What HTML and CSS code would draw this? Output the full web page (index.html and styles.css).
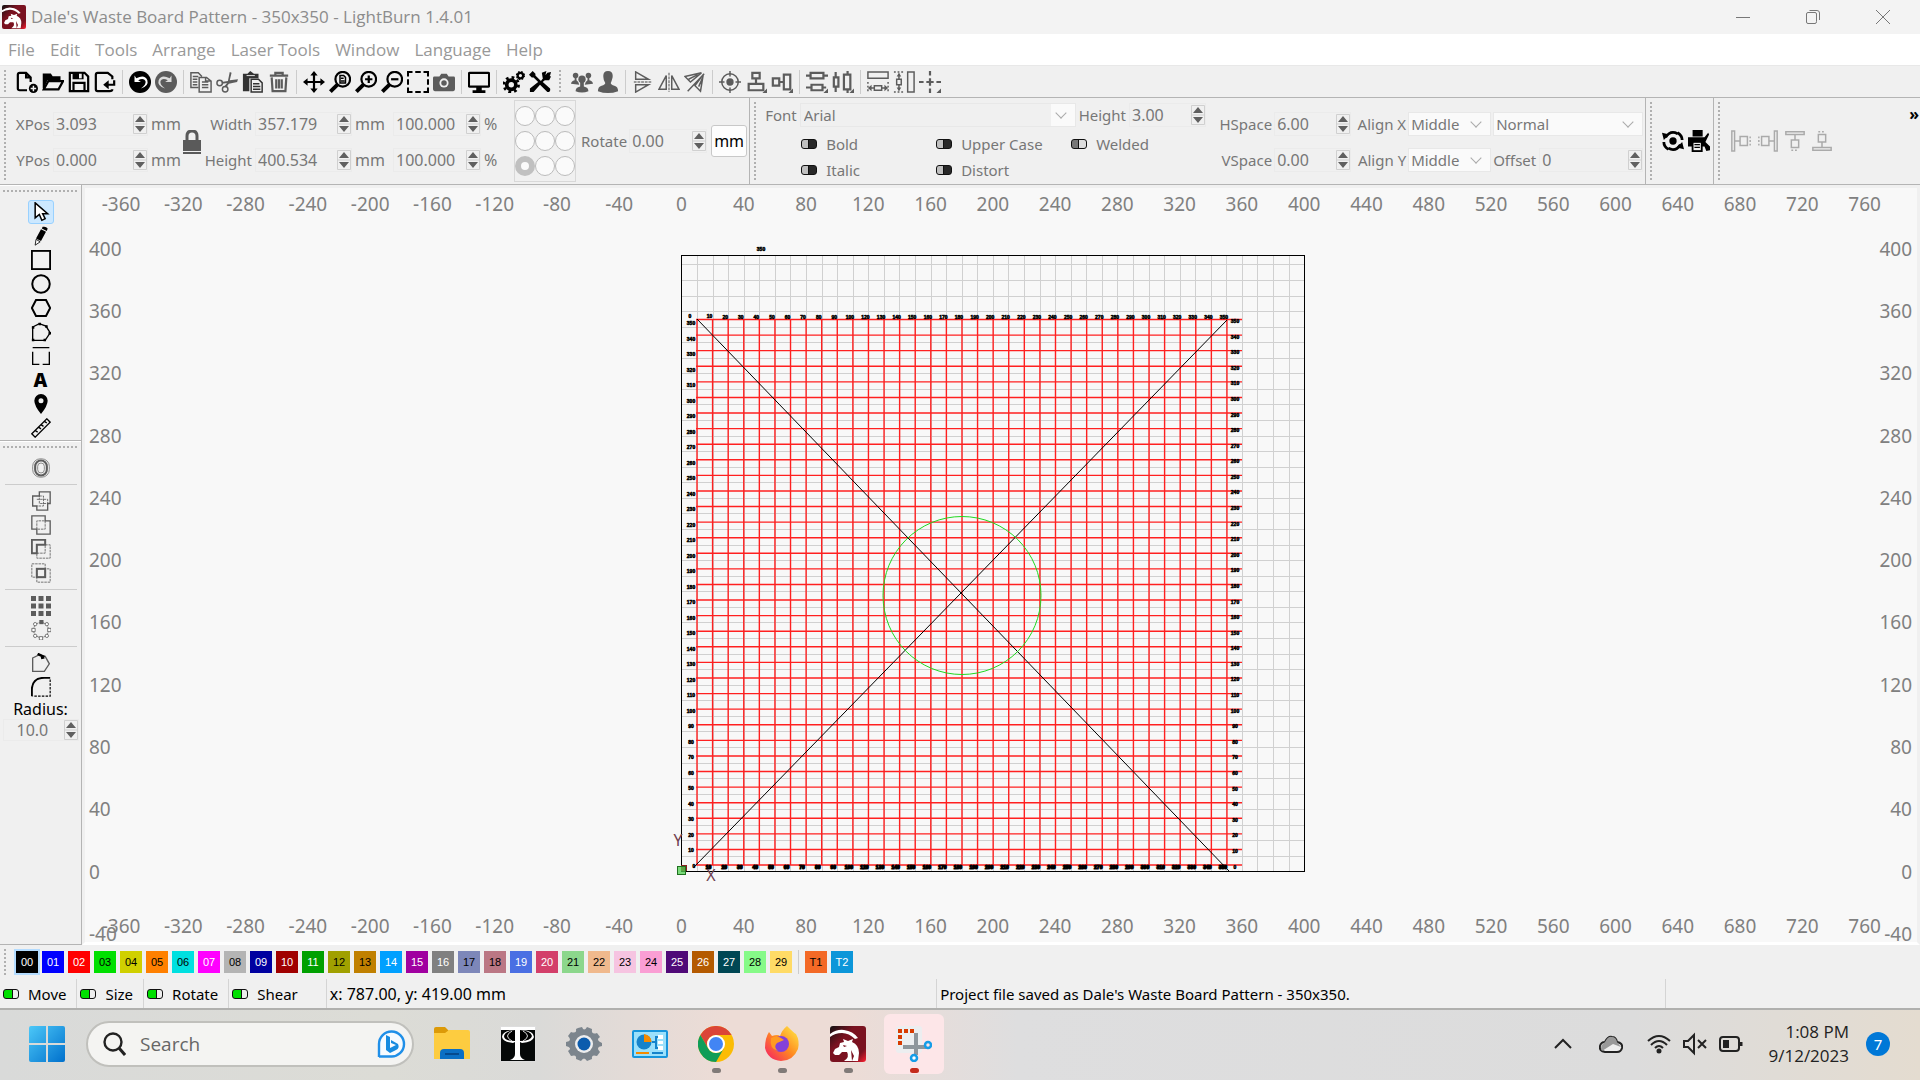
FILE: index.html
```
<!DOCTYPE html>
<html lang="en">
<head>
    <meta charset="UTF-8">
    <meta name="viewport" content="width=device-width, initial-scale=1.0">
    <title>Dale's Waste Board Pattern - 350x350 - LightBurn 1.4.01</title>
    <link rel="stylesheet" href="styles.css">
</head>
<body>
    <!-- Shared shapes -->
    <svg class="defs" aria-hidden="true">
        <linearGradient id="red" x1="0" y1="0" x2="1" y2="1">
            <stop offset="0" stop-color="#111"/><stop offset=".35" stop-color="#7a1220"/><stop offset=".8" stop-color="#7a1220"/><stop offset="1" stop-color="#ff2030"/>
        </linearGradient>
        <symbol id="dragon" viewBox="0 0 36 36">
            <rect width="36" height="36" rx="3" fill="url(#red)"/>
            <path d="M0 8Q7 3 14 4Q23 5 28 12L25 13Q19 7 12 7Q5 7 0 11Z" fill="#fff"/>
            <path d="M3 27L5 23L9 21L10 17L14 16L13 13L18 15L23 13L22 16Q29 19 29 27L28 35H14Q20 31 17 26L12 26L9 29L5 29Z" fill="#fff"/>
            <path d="M13 19l4 1-3 1zM21 24l3 6-2 5M16 25l-6 1" fill="#7a1220"/>
        </symbol>
        <symbol id="spin" viewBox="0 0 14 20">
            <path d="M.5 .5H13.5V19.5H.5ZM1 10H13" fill="none" stroke="#d0d0d0"/>
            <path d="M7 2L12 8H2ZM7 18L12 12H2Z" fill="#606060"/>
        </symbol>
    </svg>

    <header class="title-bar">
        <svg class="app-icon"><use href="#dragon"/></svg>
        <span class="title">Dale's Waste Board Pattern - 350x350 - LightBurn 1.4.01</span>
        <button class="win-btn" aria-label="Minimize"><svg viewBox="0 0 16 16"><path d="M1 8.5H15"/></svg></button>
        <button class="win-btn" aria-label="Restore"><svg viewBox="0 0 16 16"><path d="M1.5 5Q1.5 3.500 3 3.500H10Q11.500 3.500 11.500 5V12.500Q11.500 14.500 10 14.500H3Q1.500 14.500 1.500 13ZM4.500 1.500H12Q14.500 1.500 14.500 4V11"/></svg></button>
        <button class="win-btn" aria-label="Close"><svg viewBox="0 0 16 16"><path d="M1 1L15 15M15 1L1 15"/></svg></button>
    </header>

    <nav class="menu-bar">
        <button>File</button><button>Edit</button><button>Tools</button><button>Arrange</button><button>Laser Tools</button><button>Window</button><button>Language</button><button>Help</button>
    </nav>

    <div class="tool-bar">
        <i class="handle"></i>
        <div class="tools">
            <button aria-label="New"><svg viewBox="0 0 24 24"><path class="l" d="M12 21H4Q2 21 2 19V4Q2 2 4 2H11L16 7V12M11 2V7H16"/><circle cx="19" cy="19" r="5"/><path d="M19 16v6M16 19h6" stroke="#f0f0f0" stroke-width="1.6"/></svg></button>
            <button aria-label="Open"><svg viewBox="0 0 24 24"><path class="l" d="M2 19V4H9L11 7H19V10M2 20L7 11H23L18 20Z"/><path d="M2 4H9L11 7H19V10H6L2 19Z"/></svg></button>
            <button aria-label="Save"><svg viewBox="0 0 24 24"><path class="l" d="M2 2H18L22 6V22H2ZM6 22V13H18V22"/><path d="M5 2H17V9H5Z"/><path d="M12 3h3v5h-3z" fill="#f0f0f0"/></svg></button>
            <button aria-label="Import"><svg viewBox="0 0 24 24"><path class="l" d="M20 9V6L15 2H4Q2 2 2 4V20Q2 22 4 22H17Q20 22 20 20M22 10V15H14"/><path d="M10 15L16 10V20Z"/></svg></button>
            <i class="sep"></i>
            <button aria-label="Undo"><svg viewBox="0 0 24 24"><circle cx="12" cy="12" r="12"/><path d="M6 5V12H13L10 10Q16 7 18 11Q19 15 13 19Q22 16 20 10Q17 3 8 8Z" fill="#fff"/></svg></button>
            <button class="gray" aria-label="Redo"><svg viewBox="0 0 24 24"><circle cx="12" cy="12" r="12"/><path d="M18 5V12H11L14 10Q8 7 6 11Q5 15 11 19Q2 16 4 10Q7 3 16 8Z" fill="#ddd"/></svg></button>
            <i class="sep"></i>
            <button class="gray" aria-label="Copy"><svg viewBox="0 0 24 24"><path class="m" d="M9 18H1V2H9L13 6M3 6h6M3 9h5M3 12h5M3 15h5M10 7H18L23 11V23H10ZM13 12h7M13 15h7M13 18h7M17 7v4h5"/></svg></button>
            <button class="gray" aria-label="Cut"><svg viewBox="0 0 24 24"><circle class="m" cx="4" cy="13" r="3"/><circle class="m" cx="10" cy="20" r="3"/><path d="M6 12L13 11L15 1L17 2L15 10L24 9L23 12L14 14L11 18L9 17L12 13L7 14Z"/></svg></button>
            <button class="dark" aria-label="Paste"><svg viewBox="0 0 24 24"><path d="M1 3H6L9 0L13 3H18V8H8V22H1Z"/><path class="m" d="M10 9H18L22 13V23H10ZM12 14h7M12 17h8M12 20h8"/><path d="M5 5h9" stroke="#eee"/></svg></button>
            <button class="gray" aria-label="Delete"><svg viewBox="0 0 24 24"><path class="l" d="M2 5H22M8 5V2H16V5M4 7L5 22H19L20 7M9 9V19M12 9V19M15 9V19"/></svg></button>
            <i class="sep"></i>
            <button aria-label="Move"><svg viewBox="0 0 24 24"><path class="l" d="M12 2V22M2 12H22"/><path d="M12 0L16 5H8ZM12 24L8 19H16ZM0 12L5 8V16ZM24 12L19 16V8Z"/></svg></button>
            <button aria-label="Zoom to page"><svg viewBox="0 0 24 24"><circle class="l" cx="15" cy="9" r="8"/><path d="M8 13L11 16L3 24L0 21Z"/><path class="m" d="M12 5H16L18 7V13H12ZM13 8h3M13 11h4"/></svg></button>
            <button aria-label="Zoom in"><svg viewBox="0 0 24 24"><circle class="l" cx="15" cy="9" r="8"/><path d="M8 13L11 16L3 24L0 21Z"/><path class="l" d="M15 5V13M11 9H19"/></svg></button>
            <button aria-label="Zoom out"><svg viewBox="0 0 24 24"><circle class="l" cx="15" cy="9" r="8"/><path d="M8 13L11 16L3 24L0 21Z"/><path class="l" d="M11 9H19"/></svg></button>
            <button aria-label="Frame selection"><svg viewBox="0 0 24 24"><path class="l" d="M1 6V1H6M9 1H15M18 1H23V6M23 9V15M23 18V23H18M15 23H9M6 23H1V18M1 15V9"/></svg></button>
            <button class="gray" aria-label="Camera"><svg viewBox="0 0 24 24"><path d="M1 6H7L9 3H15L17 6H23Q24 6 24 8V20Q24 22 22 22H2Q0 22 0 20V8Q0 6 1 6Z"/><circle cx="12" cy="13" r="5" fill="#f0f0f0"/><circle cx="12" cy="13" r="3"/></svg></button>
            <i class="sep"></i>
            <button aria-label="Preview"><svg viewBox="0 0 24 24"><rect class="l" x="1" y="2" width="22" height="15" rx="1"/><path d="M9 17H15V21H19V24H5V21H9Z"/></svg></button>
            <i class="sep"></i>
            <button aria-label="Settings"><svg viewBox="0 0 24 24"><circle cx="9" cy="15" r="5" fill="none" stroke="currentColor" stroke-width="4"/><circle cx="9" cy="15" r="8" fill="none" stroke="currentColor" stroke-width="3" stroke-dasharray="3 3.300"/><circle cx="19" cy="5" r="3" fill="none" stroke="currentColor" stroke-width="2.500"/><circle cx="19" cy="5" r="4" fill="none" stroke="currentColor" stroke-width="2" stroke-dasharray="1.500 1.700"/></svg></button>
            <button aria-label="Device settings"><svg viewBox="0 0 24 24"><path d="M0 4L4 0L7 3V5L13 11L20 2L24 1L23 5L15 12L23 19Q24 23 20 23L12 15L5 23H1V19L10 12L5 7H3Z"/><path d="M15 8L14 2L19 0L18 4L24 6L22 10L17 10Z"/></svg></button>
        </div>
        <i class="handle group-edge"></i>
        <div class="tools gray">
            <button aria-label="Group"><svg viewBox="0 0 24 24"><circle cx="5" cy="5" r="3"/><circle cx="19" cy="5" r="3"/><circle cx="12" cy="9" r="4"/><path d="M0 14Q0 11 4 10V7H6V10Q9 12 9 15ZM24 14Q24 11 20 10V7H18V10Q15 12 15 15ZM5 22Q5 18 10 17V12H14V17Q19 18 19 22Q12 25 5 22Z"/></svg></button>
            <button aria-label="Ungroup"><svg viewBox="0 0 24 24"><path d="M12 0Q18 0 17 7Q16 11 15 13Q15 15 19 16Q23 17 23 22Q12 26 1 22Q1 17 5 16Q9 15 9 13Q7 10 7 7Q6 0 12 0Z"/></svg></button>
            <i class="sep"></i>
            <button aria-label="Flip vertical"><svg viewBox="0 0 24 24"><path class="m" d="M4 1V9H18ZM4 23V15H18Z"/><path d="M2 12H21" stroke="#999" stroke-width="2" stroke-dasharray="3 1"/></svg></button>
            <button aria-label="Flip horizontal"><svg viewBox="0 0 24 24"><path class="m" d="M1 20H9V5ZM23 20H15V5Z"/><path d="M12 2V23" stroke="#999" stroke-width="2" stroke-dasharray="3 1"/></svg></button>
            <button aria-label="Mirror across line"><svg viewBox="0 0 24 24"><path class="m" d="M1 6L19 2L7 12ZM21 4L18 22L12 16ZM4 22L22 3M5 9L15 4M16 17L20 8"/></svg></button>
            <i class="sep"></i>
            <button aria-label="Align centers"><svg viewBox="0 0 24 24"><circle class="m" cx="12" cy="12" r="9"/><circle cx="12" cy="12" r="4"/><path class="m" d="M12 0V6M12 18V24M0 12H6M18 12H24"/></svg></button>
            <button aria-label="Align vertical"><svg viewBox="0 0 24 24"><path class="l" d="M8 2H16V8H8ZM12 8V14M4 14H20V21H4Z"/><path d="M24 19V24H19Z"/></svg></button>
            <button aria-label="Align horizontal"><svg viewBox="0 0 24 24"><path class="l" d="M2 8H9V16H2ZM9 12H14M14 4H21V20H14Z"/><path d="M24 19V24H19Z"/></svg></button>
            <i class="sep"></i>
            <button aria-label="Distribute vertical"><svg viewBox="0 0 24 24"><path class="l" d="M5 2H19V8H5ZM0 5H5M19 5H24M6 15H18V21H6ZM0 18H6M18 18H22"/><path d="M24 19V24H19Z"/></svg></button>
            <button aria-label="Distribute horizontal"><svg viewBox="0 0 24 24"><path class="l" d="M2 7H7V17H2ZM4 1V7M4 17V23M13 4H20V20H13ZM17 0V4M17 20V24"/><path d="M24 19V24H19Z"/></svg></button>
            <i class="sep"></i>
            <button aria-label="Make same width"><svg viewBox="0 0 24 24"><path class="m" d="M1 1H23V8H1ZM8 16H16V21H8ZM3 18.500H8M16 18.500H21"/><path d="M1 18.500L5 15V22ZM23 18.500L19 15V22Z"/><path class="m" d="M1 12V24M23 12V24" stroke-dasharray="2 2"/></svg></button>
            <button aria-label="Make same height"><svg viewBox="0 0 24 24"><path class="m" d="M16 1H23V23H16ZM4 9H9V15H4ZM6.500 3V9M6.500 15V21"/><path d="M6.500 2L9 6H4ZM6.500 22L4 18H9Z"/><path class="m" d="M1 1H12M1 23H12" stroke-dasharray="2 2"/></svg></button>
            <button aria-label="Move to position"><svg viewBox="0 0 24 24"><path class="l" d="M12 0V5M12 8V16M12 19V24M0 12H5M8 12H16M19 12H24"/><path d="M24 19V24H19Z"/></svg></button>
        </div>
    </div>

    <div class="props">
        <section class="panel">
            <i class="handle"></i>
            <div class="position">
                <label for="xpos">XPos</label>
                <span class="spin"><input id="xpos" value="3.093"><svg><use href="#spin"/></svg></span>
                <span>mm</span>
                <button class="lock" aria-label="Lock aspect ratio"><svg viewBox="0 0 18 24"><path d="M4 11V6Q4 1 9 1T14 6V11" fill="none" stroke="#5a5a5a" stroke-width="3"/><path d="M0 10H18V21H0ZM0 22H18V24H0Z" fill="#5a5a5a"/></svg></button>
                <label for="width">Width</label>
                <span class="spin"><input id="width" value="357.179"><svg><use href="#spin"/></svg></span>
                <span>mm</span>
                <span class="spin"><input aria-label="Width percent" value="100.000"><svg><use href="#spin"/></svg></span>
                <span>%</span>
                <label for="ypos">YPos</label>
                <span class="spin"><input id="ypos" value="0.000"><svg><use href="#spin"/></svg></span>
                <span>mm</span>
                <label for="height">Height</label>
                <span class="spin"><input id="height" value="400.534"><svg><use href="#spin"/></svg></span>
                <span>mm</span>
                <span class="spin"><input aria-label="Height percent" value="100.000"><svg><use href="#spin"/></svg></span>
                <span>%</span>
            </div>
            <div class="anchors">
                <input type="radio" name="anchor" aria-label="Top left"><input type="radio" name="anchor" aria-label="Top"><input type="radio" name="anchor" aria-label="Top right">
                <input type="radio" name="anchor" aria-label="Left"><input type="radio" name="anchor" aria-label="Center"><input type="radio" name="anchor" aria-label="Right">
                <input type="radio" name="anchor" aria-label="Bottom left" checked><input type="radio" name="anchor" aria-label="Bottom"><input type="radio" name="anchor" aria-label="Bottom right">
            </div>
            <label for="rotate">Rotate</label>
            <span class="spin rotate"><input id="rotate" value="0.00"><svg><use href="#spin"/></svg></span>
            <button class="unit">mm</button>
        </section>
        <section class="panel">
            <i class="handle"></i>
            <div class="font-box">
                <div class="font-row">
                    <label for="font">Font</label>
                    <span class="drop font"><select id="font"><option>Arial</option></select></span>
                    <label for="fheight">Height</label>
                    <span class="spin small"><input id="fheight" value="3.00"><svg><use href="#spin"/></svg></span>
                </div>
                <div class="checks">
                    <label><input type="checkbox" class="toggle">Bold</label>
                    <label><input type="checkbox" class="toggle">Upper Case</label>
                    <label><input type="checkbox" class="toggle" checked>Welded</label>
                    <label><input type="checkbox" class="toggle">Italic</label>
                    <label><input type="checkbox" class="toggle">Distort</label>
                </div>
            </div>
            <div class="spacing">
                <label for="hspace">HSpace</label>
                <span class="spin"><input id="hspace" value="6.00"><svg><use href="#spin"/></svg></span>
                <label for="alignx">Align X</label>
                <span class="drop"><select id="alignx"><option>Middle</option></select></span>
                <span class="drop"><select aria-label="Text mode"><option>Normal</option></select></span>
                <label for="vspace">VSpace</label>
                <span class="spin"><input id="vspace" value="0.00"><svg><use href="#spin"/></svg></span>
                <label for="aligny">Align Y</label>
                <span class="drop"><select id="aligny"><option>Middle</option></select></span>
                <span class="offset"><label for="offset">Offset</label><span class="spin"><input id="offset" value="0"><svg><use href="#spin"/></svg></span></span>
            </div>
        </section>
        <section class="panel">
            <i class="handle"></i>
            <div class="tools print">
                <button aria-label="Rotary"><svg viewBox="0 0 24 24"><path d="M4 8Q9 0 17 4M20 16Q15 24 7 20M2 13Q2 18 7 21M22 11Q22 6 17 3" fill="none" stroke="currentColor" stroke-width="3"/><circle cx="12" cy="12" r="4"/><path d="M0 3L8 5L2 11ZM24 21L16 19L22 13Z"/></svg></button>
                <button aria-label="Print and cut"><svg viewBox="0 0 24 24"><path d="M5 0H16V7H5ZM0 8H18L22 3L23 5L19 13L24 18V22L20 23L18 18H16V24H4V18H0Z"/><path d="M6 14H14V22H6Z" fill="#f0f0f0"/><path d="M7 16h6M7 19h6" stroke="currentColor" stroke-width="1.500"/></svg></button>
            </div>
        </section>
        <section class="panel last">
            <i class="handle"></i>
            <div class="tools light">
                <button aria-label="Align left"><svg viewBox="0 0 24 24"><path class="m" d="M2 1H5V23H2ZM5 12H11M11 7H19V17H11Z"/><path class="m" d="M22 7V17" stroke-dasharray="2 2"/></svg></button>
                <button aria-label="Align right"><svg viewBox="0 0 24 24"><path class="m" d="M19 1H22V23H19ZM19 12H13M5 7H13V17H5Z"/><path class="m" d="M2 7V17" stroke-dasharray="2 2"/></svg></button>
                <button aria-label="Align top"><svg viewBox="0 0 24 24"><path class="m" d="M2 2H22V5H2ZM12 5V11M8 11H16V19H8Z"/><path class="m" d="M8 22H16" stroke-dasharray="2 2"/></svg></button>
                <button aria-label="Align bottom"><svg viewBox="0 0 24 24"><path class="m" d="M2 19H22V22H2ZM12 19V13M8 5H16V13H8Z"/><path class="m" d="M8 2H16" stroke-dasharray="2 2"/></svg></button>
            </div>
            <button class="more" aria-label="More">»</button>
        </section>
    </div>

    <main class="workspace">
        <aside class="side">
            <div class="side-group">
                <i class="handle-h"></i>
                <button class="selected" aria-label="Select"><svg viewBox="0 0 24 24"><path d="M5 1V19L10 15L13 22L17 20L14 14H20Z" fill="#fff" stroke="#000" stroke-width="1.800"/></svg></button>
                <button aria-label="Draw lines"><svg viewBox="0 0 24 24"><path d="M14 1Q18 0 20 3L19 6L13 3ZM12 4L18 7L12 18L6 15Z"/><path d="M6 16L11 19L5 23Z" fill="#fff" stroke="#000"/></svg></button>
                <button aria-label="Rectangle"><svg viewBox="0 0 24 24"><rect class="l" x="1" y="1" width="22" height="22"/></svg></button>
                <button aria-label="Ellipse"><svg viewBox="0 0 24 24"><circle class="l" cx="12" cy="12" r="10.500"/></svg></button>
                <button aria-label="Polygon"><svg viewBox="0 0 24 24"><path class="l" d="M6 2.500H18L23 12L18 21.500H6L1 12Z"/></svg></button>
                <button aria-label="Edit nodes"><svg viewBox="0 0 24 24"><path class="m" d="M2 6L10 2L18 5L23 13L17 22H2Z"/><path d="M1 5h3v3H1zM9 1h3v3H9zM17 4h3v3h-3zM21 12h3v3h-3zM15 20h3v3h-3zM1 20h3v3H1z"/></svg></button>
                <button aria-label="Tabs"><svg viewBox="0 0 24 24"><path class="m" d="M2 2H22M2 7V22H10M22 7V22H14"/></svg></button>
                <button class="text-tool" aria-label="Text">A</button>
                <button aria-label="Position laser"><svg viewBox="0 0 24 24"><path fill-rule="evenodd" d="M12 24Q4 14 4 8A8 8 0 0 1 20 8Q20 14 12 24ZM12 5A3 3 0 1 0 12 11A3 3 0 1 0 12 5Z"/></svg></button>
                <button aria-label="Measure"><svg viewBox="0 0 24 24"><path class="m" d="M1 19L19 1L23 5L5 23ZM5 15L8 17M9 11L12 13M12 8L15 10M16 4L19 6"/></svg></button>
            </div>
            <div class="side-group gray">
                <i class="handle-h"></i>
                <button aria-label="Offset shapes"><svg viewBox="0 0 24 24"><rect x="2" y="1" width="20" height="22" rx="9" fill="none" stroke="#777"/><rect x="5" y="3" width="14" height="18" rx="7" fill="none" stroke="currentColor" stroke-width="2.500"/><rect x="8" y="6" width="8" height="12" rx="4" fill="none" stroke="#777"/></svg></button>
                <i class="rule"></i>
                <button aria-label="Weld"><svg viewBox="0 0 24 24"><path class="m" d="M2 6H10V1H23V15H20V23H7V18H2Z"/><path class="d" d="M10 6H15V18H7M7 10H20V15H10V6"/></svg></button>
                <button aria-label="Boolean union"><svg viewBox="0 0 24 24"><path class="m" d="M1 1H17V7H23V23H7V17H1Z"/><path class="d" d="M7 17V7H17V17Z"/></svg></button>
                <button aria-label="Boolean subtract"><svg viewBox="0 0 24 24"><path class="l" d="M1 1H17V7H7V17H1Z"/><path class="d" d="M17 7H23V23H7V17H17Z"/></svg></button>
                <button aria-label="Boolean intersection"><svg viewBox="0 0 24 24"><path class="d" d="M1 1H17V17H1ZM7 7H23V23H7Z"/><rect class="l" x="7" y="7" width="10" height="10"/></svg></button>
                <i class="rule"></i>
                <button aria-label="Grid array"><svg viewBox="0 0 24 24"><path d="M0 0h6v6H0zM9 0h6v6H9zM18 0h6v6h-6zM0 9h6v6H0zM9 9h6v6H9zM18 9h6v6h-6zM0 18h6v6H0zM9 18h6v6H9zM18 18h6v6h-6z"/></svg></button>
                <button aria-label="Circular array"><svg viewBox="0 0 24 24"><circle class="d" cx="12" cy="12" r="9"/><path d="M10 0h5v5h-5z"/><g fill="#fff" stroke="currentColor"><path d="M1 10h4v4H1zM20 10h4v4h-4zM10 20h4v4h-4z"/><circle cx="5" cy="5" r="2"/><circle cx="19" cy="5" r="2"/><circle cx="5" cy="19" r="2"/><circle cx="19" cy="19" r="2"/></g></svg></button>
                <i class="rule"></i>
                <button aria-label="Start point"><svg viewBox="0 0 24 24"><path class="m" d="M2 6L10 2L17 4L22 13L16 22H2Z"/><path d="M8 1L16 5M16 5L12 6" stroke="#000" stroke-width="3"/></svg></button>
                <button class="black" aria-label="Radius"><svg viewBox="0 0 24 24"><path class="l" d="M1 23V16Q1 1 16 1H23"/><path d="M23 3V23H2" fill="none" stroke="#000" stroke-width="1.400" stroke-dasharray="3 1.500"/></svg></button>
                <label for="radius">Radius:</label>
                <span class="spin"><input id="radius" value="10.0"><svg><use href="#spin"/></svg></span>
            </div>
        </aside>
        <div class="canvas">
            <svg id="bed" viewBox="85 188 1832 754"></svg>
        </div>
    </main>

    <div class="palette">
        <i class="handle"></i>
        <div class="swatches" id="swatches"></div>
    </div>

    <div class="status-bar">
        <label class="cell"><input type="checkbox" class="toggle" checked>Move</label>
        <label class="cell"><input type="checkbox" class="toggle" checked>Size</label>
        <label class="cell"><input type="checkbox" class="toggle" checked>Rotate</label>
        <label class="cell shear"><input type="checkbox" class="toggle" checked>Shear</label>
        <span class="cell coords">x: 787.00, y: 419.00 mm</span>
        <span class="cell message">Project file saved as Dale's Waste Board Pattern - 350x350.</span>
        <span class="cell rest"></span>
    </div>

    <footer class="task-bar">
        <button class="start" aria-label="Start"><svg viewBox="0 0 36 36"><linearGradient id="win" x1="0" y1="0" x2="1" y2="1"><stop offset="0" stop-color="#4cc8f8"/><stop offset="1" stop-color="#0070cc"/></linearGradient><path d="M0 2Q0 0 2 0H17V17H0ZM19 0H34Q36 0 36 2V17H19ZM0 19H17V36H2Q0 36 0 34ZM19 19H36V34Q36 36 34 36H19Z" fill="url(#win)"/></svg></button>
        <div class="search">
            <svg viewBox="0 0 24 24"><circle cx="11" cy="10" r="8.500" fill="none" stroke="#222" stroke-width="2.400"/><path d="M17 16L23 23" stroke="#222" stroke-width="3"/></svg>
            <input type="search" placeholder="Search" aria-label="Search">
            <svg class="bing" viewBox="0 0 30 30"><path d="M3 28V15A12.500 12.500 0 1 1 15 27.500H3" fill="#f6fbff" stroke="#1f8fe8" stroke-width="2.400"/><path d="M10 6L14 8V19L20 16L15 14V11L22 15Q24 19 20 21L14 24L10 21Z" fill="#168be0"/></svg>
        </div>
        <button class="task" aria-label="File Explorer"><svg viewBox="0 0 36 36"><path d="M0 3Q0 1 2 1H11L15 5L12 9H0Z" fill="#dc9a08"/><path d="M0 7H11L15 4H34Q36 4 36 6V33H0Z" fill="#fdcc40"/><path d="M6 33V27Q6 23 10 23H26Q30 23 30 27V33Z" fill="#0b6fc4"/><path d="M11 28H25" stroke="#054a8e" stroke-width="2"/></svg></button>
        <button class="task" aria-label="Tree app"><svg viewBox="0 0 36 36"><rect x=".5" y=".5" width="35" height="35" fill="#050808" stroke="#ddd"/><path d="M1 1H35V4H22Q34 5 34 11Q33 16 22 17L20 16V28Q20 32 25 34H10Q15 32 15 28V16L13 17Q3 16 2 11Q2 5 14 4H1Z" fill="#fff"/><path d="M15 5V15Q4 15 4 10Q5 5 15 4ZM20 4V15Q31 15 32 10Q31 5 20 4Z"/><path d="M12 5Q3 10 12 15M23 5Q32 10 23 15" fill="none" stroke="#ddd"/></svg></button>
        <button class="task" aria-label="Settings"><svg viewBox="0 0 36 36"><path d="M12 2L16 1Q18 6 21 1L26 3Q25 9 31 7L34 11Q29 14 36 17V20Q29 21 34 26L31 30Q25 28 26 33L21 35Q18 30 15 35L10 33Q11 28 5 30L2 25Q7 22 0 20V16Q7 15 2 10L5 6Q11 8 10 3Z" fill="#7c858d"/><circle cx="18" cy="18" r="9" fill="#eee"/><circle cx="18" cy="18" r="6.500" fill="#0b5cad"/></svg></button>
        <button class="task" aria-label="Control Panel"><svg viewBox="0 0 36 36"><rect x="1" y="5" width="34" height="26" rx="1" fill="#9be0fb" stroke="#1695dc" stroke-width="2"/><circle cx="12" cy="16" r="7.500" fill="#1683cb"/><path d="M12 16V8Q19 9 19.500 16Z" fill="#f58a00"/><path d="M20 16H24V11H30M24 16V22H30M27 16H30" fill="none" stroke="#1683cb" stroke-width="2"/><path d="M26 9h5v4h-5zM26 15h5v3h-5zM26 20h5v4h-5z" fill="#fff"/><path d="M4 27H17" stroke="#f58a00" stroke-width="2"/><path d="M20 27H31" stroke="#1683cb" stroke-width="2"/></svg></button>
        <button class="task open" aria-label="Chrome"><svg viewBox="0 0 36 36"><circle cx="18" cy="18" r="18" fill="#fbbc05"/><path d="M2.400 9A18 18 0 0 1 33.600 9H18A9 9 0 0 0 10.200 22.500Z" fill="#db4437"/><path d="M2.400 9A18 18 0 0 0 18 36L25.800 22.500A9 9 0 0 1 10.200 22.500Z" fill="#0f9d58"/><circle cx="18" cy="18" r="9" fill="#fff"/><circle cx="18" cy="18" r="7" fill="#4285f4"/></svg></button>
        <button class="task open" aria-label="Firefox"><svg viewBox="0 0 36 36"><linearGradient id="fox" x1="1" y1="0" x2="0" y2="1"><stop offset="0" stop-color="#fff04a"/><stop offset=".500" stop-color="#ff8a20"/><stop offset="1" stop-color="#f5156c"/></linearGradient><path d="M23 0Q30 7 32 8Q36 15 34 23Q29 35 17 35Q4 34 1 22Q1 12 5 6L8 10Q14 8 16 10Q18 4 23 0Z" fill="url(#fox)"/><circle cx="17" cy="18" r="8" fill="#8440d8"/><path d="M7 12Q13 9 17 12L20 14L13 17Q9 21 14 25Q5 23 7 12Z" fill="#ff9a22"/></svg></button>
        <button class="task open" aria-label="LightBurn"><svg><use href="#dragon"/></svg></button>
        <button class="task open active" aria-label="Snipping Tool"><svg viewBox="0 0 36 36"><rect width="26" height="27" rx="3" fill="#eceef0"/><path d="M20 7V29M7 21H30" stroke="#8e969c" stroke-width="4"/><path d="M2 5H18M4 9V20" fill="none" stroke="#d83b01" stroke-width="4" stroke-dasharray="4 2"/><circle cx="32" cy="19" r="3" fill="none" stroke="#159de8" stroke-width="2.500"/><path d="M18 28V32" stroke="#159de8" stroke-width="3"/><circle cx="18" cy="32" r="3" fill="#fff" stroke="#159de8" stroke-width="2.500"/></svg></button>
        <div class="tray">
            <button aria-label="Hidden icons"><svg viewBox="0 0 24 24"><path d="M4 16L12 8L20 16"/></svg></button>
            <button class="cloud" aria-label="OneDrive"><svg viewBox="0 0 24 24"><path d="M6 20Q0 19 1 14Q2 10 6 10Q9 4 13 5Q17 5 18 10Q24 11 23 16Q22 20 18 20Z" fill="#eee"/><path d="M6 10Q9 4 13 5Q17 5 18 10L22 15L14 12L3 19Q0 14 6 10Z" fill="#999" stroke="none"/></svg></button>
            <button aria-label="Network"><svg viewBox="0 0 24 24"><path d="M1 9Q12-1 23 9M4 13Q12 5 20 13M8 16Q12 12 16 16"/><circle cx="12" cy="19" r="1.500" fill="#222"/></svg></button>
            <button aria-label="Volume"><svg viewBox="0 0 24 24"><path d="M1 9H5L11 3V21L5 15H1ZM15 8L23 16M23 8L15 16"/></svg></button>
            <button aria-label="Battery"><svg viewBox="0 0 24 24"><rect x="1" y="5" width="19" height="14" rx="3"/><path d="M5 9H9V15H5Z" fill="#222"/><path d="M22 10V14" stroke-width="3"/></svg></button>
            <time class="clock"><span>1:08 PM</span><span>9/12/2023</span></time>
            <button class="badge">7</button>
        </div>
    </footer>

    <script src="script.js"></script>
</body>
</html>
```
FILE: styles.css
```
* {
    box-sizing: border-box;
}
body {
    margin: 0;
    height: 100vh;
    display: flex;
    flex-direction: column;
    overflow: hidden;
    background-color: #f0f0f0;
    font-family: "Noto Sans", sans-serif;
    font-size: 16px;
    line-height: 20px;
    color: #777;
}
button, input, select {
    font: inherit;
    color: inherit;
    border: 0;
    padding: 0;
    background: none;
}
.defs {
    position: absolute;
    width: 0;
    height: 0;
}
.l, .m, .d {
    fill: none;
    stroke: currentColor;
    stroke-width: 2.4;
}
.m {
    stroke-width: 1.6;
}
.d {
    stroke-width: 1;
    stroke-dasharray: 3 1;
}
.gray {
    color: #5c5c5c;
}
.black {
    color: #000;
}

/* Title and menu */
.title-bar {
    flex: none;
    height: 34px;
    display: flex;
    align-items: center;
    padding: 0 2px;
    background-color: #f3f3f3;
    font-family: "Open Sans", sans-serif;
    font-size: 17px;
    color: #8c8c8c;
}
.app-icon {
    width: 24px;
    height: 24px;
    margin-right: 5px;
}
.title {
    flex: 1;
}
.win-btn {
    width: 70px;
    height: 34px;
}
.win-btn svg {
    width: 16px;
    height: 16px;
    display: block;
    margin: 0 auto;
    fill: none;
    stroke: #777;
}
.menu-bar {
    flex: none;
    height: 31px;
    display: flex;
    align-items: center;
    gap: 15px;
    padding: 1px 8px 0;
    background-color: #fff;
    font-family: "Open Sans", sans-serif;
    font-size: 17px;
    color: #999;
}

/* Icon toolbar */
.tool-bar {
    flex: none;
    height: 33px;
    display: flex;
    align-items: center;
    border-top: 1px solid #e8e8e8;
    border-bottom: 1px solid #b4b4b4;
}
.handle {
    flex: none;
    align-self: stretch;
    width: 2px;
    margin: 4px 4px;
    background: repeating-linear-gradient(#b0b0b0 0 2px, transparent 2px 4px);
}
.tools {
    display: flex;
    align-items: center;
    gap: 4px;
    padding-left: 6px;
    color: #000;
}
.tools button {
    width: 22px;
    height: 22px;
}
.tools.gray, .tools .gray {
    color: #5c5c5c;
}
.tools .dark {
    color: #333;
}
.tools.light {
    color: #aaa;
    gap: 5px;
}
.tools svg {
    display: block;
    width: 22px;
    height: 22px;
    fill: currentColor;
}
.sep {
    width: 1px;
    height: 24px;
    margin: 0 2px;
    background-color: #ccc;
}
.group-edge {
    margin-left: 8px;
}

/* Numeric and text settings */
.props {
    flex: none;
    display: flex;
    height: 87px;
    border-bottom: 1px solid #b4b4b4;
}
.panel {
    display: flex;
    align-items: center;
    border-right: 1px solid #b4b4b4;
}
.panel.last {
    flex: 1;
    border-right: 0;
}
.position {
    display: grid;
    grid-template-columns: 36px 95px 28px 19px 48px 97px 35px 88px 18px;
    gap: 12px 3px;
    align-items: center;
    padding: 2px 0 0 4px;
}
.position label, .spacing label {
    text-align: right;
    white-space: nowrap;
}
.props label {
    font-size: 15px;
}
.lock {
    grid-row: 1 / 3;
    grid-column: 4;
    width: 18px;
    height: 24px;
    justify-self: center;
}
.lock svg {
    display: block;
    width: 18px;
    height: 24px;
}
.spin {
    display: flex;
    align-items: center;
    height: 24px;
    border: 1px solid #ebebeb;
}
.spin input {
    flex: 1;
    min-width: 0;
    width: 20px;
    padding-left: 2px;
}
.spin svg {
    flex: none;
    width: 14px;
    height: 20px;
}
.anchors {
    display: grid;
    grid-template-columns: repeat(3, 20px);
    gap: 5px 0;
    padding: 5px 0;
    margin: 0 5px 0 12px;
    border: 1px solid #d8d8d8;
}
.anchors input {
    appearance: none;
    width: 20px;
    height: 20px;
    margin: 0;
    border: 1px solid #bbb;
    border-radius: 50%;
    background-color: #fafafa;
}
.anchors input:checked {
    border: 6px solid #c0c0c0;
}
.rotate {
    width: 78px;
    margin: 0 4px 0 2px;
}
.unit {
    width: 36px;
    height: 32px;
    border: 1px solid #c8c8c8;
    border-radius: 3px;
    background-color: #fdfdfd;
    color: #000;
    margin-right: 2px;
}
.drop {
    position: relative;
    height: 24px;
    border: 1px solid #e8e8e8;
    background-color: #fafafa;
}
.drop::after {
    content: "";
    position: absolute;
    right: 10px;
    top: 5px;
    width: 7px;
    height: 7px;
    border: solid #aaa;
    border-width: 0 1px 1px 0;
    transform: rotate(45deg);
    pointer-events: none;
}
.drop select {
    display: block;
    appearance: none;
    width: 100%;
    height: 22px;
    padding-left: 2px;
    font-size: 15px;
}
.font {
    width: 276px;
}
.font select {
    padding-left: 3px;
    background: linear-gradient(to right, #f0f0f0 250px, #fafafa 250px);
}
.small {
    width: 77px;
}
.font-box {
    align-self: flex-start;
    padding: 5px 0 0 5px;
}
.font-row {
    display: flex;
    align-items: center;
    gap: 3px;
}
.checks {
    display: grid;
    grid-template-columns: repeat(3, 135px);
    gap: 2px 0;
    padding: 5px 0 0 36px;
}
.checks label {
    display: flex;
    align-items: center;
    gap: 9px;
    height: 24px;
}
.toggle {
    appearance: none;
    flex: none;
    width: 16px;
    height: 10px;
    margin: 0;
    border: 1px solid #111;
    border-radius: 3px;
    background: linear-gradient(to right, #c0c0c0 6px, #111 6px 7px, #282828 7px);
}
.toggle:checked {
    background: linear-gradient(to right, #777 6px, #111 6px 7px, #ddd 7px);
}
.spacing {
    display: grid;
    grid-template-columns: 54px 77px 53px 83px 150px;
    gap: 12px 2px;
    align-items: center;
    padding-top: 2px;
    margin: 0 2px 0 12px;
}
.offset {
    display: flex;
    align-items: center;
    gap: 3px;
}
.offset .spin {
    flex: 1;
}
.print {
    padding: 0 3px 0 6px;
}
.more {
    align-self: flex-start;
    margin: 6px 1px 0 auto;
    color: #000;
    font-weight: bold;
}

/* Side tools and drawing area */
.workspace {
    flex: 1;
    min-height: 0;
    display: flex;
}
.side {
    flex: none;
    width: 82px;
    border-right: 1px solid #b4b4b4;
    border-bottom: 1px solid #b4b4b4;
}
.side-group {
    display: flex;
    flex-direction: column;
    align-items: center;
    border-top: 1px solid #fff;
}
.side-group:first-child {
    border-bottom: 1px solid #b4b4b4;
    color: #000;
}
.handle-h {
    width: 75px;
    height: 2px;
    margin: 4px 0 8px;
    background: repeating-linear-gradient(to right, #b0b0b0 0 2px, transparent 2px 4px);
}
.side button {
    width: 26px;
    height: 24px;
    border-radius: 3px;
}
.side svg {
    fill: currentColor;
}
.side button svg {
    display: block;
    width: 20px;
    height: 20px;
    margin: 0 auto;
}
.side .selected {
    border: 1px solid #99d1ff;
    background-color: #cce8ff;
}
.text-tool {
    font-size: 19px;
    font-weight: 900;
}
.rule {
    width: 72px;
    height: 1px;
    margin: 4px 0;
    background-color: #ccc;
}
.side label {
    color: #000;
}
.side .spin {
    width: 76px;
    height: 22px;
    color: #777;
}
.side .spin input {
    padding-left: 13px;
}
.canvas {
    flex: 1;
    min-width: 0;
    border: 3px solid #f0f0f0;
    border-bottom-color: #fff;
    background-color: #f8f8f8;
}
.canvas svg {
    display: block;
    width: 100%;
    height: 100%;
}
.ruler {
    font-size: 19px;
    fill: #808080;
}
.center {
    text-anchor: middle;
}
.right {
    text-anchor: end;
}
.grid-line {
    stroke: #d0d0d0;
}
.cut-line {
    stroke: #ff2020;
    stroke-width: 1.4;
}
.outline {
    fill: none;
    stroke: #000;
}
.score {
    fill: none;
    stroke: #20d820;
}
.mark {
    font-family: "Liberation Sans", sans-serif;
    font-size: 5px;
    font-weight: bold;
    fill: #000;
    stroke: #000;
    stroke-width: 0.5;
    text-anchor: middle;
}
.heavy {
    stroke-width: 1.2;
}
.axis {
    font-size: 16px;
    fill: #704050;
    text-anchor: middle;
}

/* Layer colours */
.palette {
    flex: none;
    height: 34px;
    display: flex;
    align-items: center;
}
.swatches {
    display: flex;
    align-items: center;
    gap: 4px;
    padding-left: 6px;
}
.swatches button {
    width: 22px;
    height: 22px;
    font-family: "Liberation Sans", sans-serif;
    font-size: 11px;
}
.swatches .current {
    outline: 2px solid #b4dcff;
}

/* Status line */
.status-bar {
    flex: none;
    height: 31px;
    display: flex;
    color: #000;
    border-bottom: 2px solid #b0b0ae;
}
.cell {
    display: flex;
    align-items: center;
    gap: 9px;
    padding: 0 10px 0 3px;
    border-right: 1px solid #d4d4d4;
    font-size: 15px;
    white-space: nowrap;
}
.status-bar .toggle {
    background: linear-gradient(to right, #00e000 8px, #111 8px 9px, #eee 9px);
}
.shear {
    padding-right: 28px;
}
.coords {
    flex: 612;
    font-size: 16px;
}
.message {
    flex: 734;
}
.rest {
    flex: 247;
    border-right: 0;
}

/* Taskbar */
.task-bar {
    flex: none;
    height: 70px;
    display: flex;
    align-items: center;
    gap: 6px;
    padding: 0 30px 2px 29px;
    background: linear-gradient(to right, #d9dad9, #dcdcd6 20%, #dadad8 28%, #eddcd6 38%, #eddcd6 44%, #dededf 53%, #dcdcdc 85%, #e4dcd0);
    color: #222;
}
.start, .start svg {
    display: block;
    width: 36px;
    height: 36px;
}
.search {
    display: flex;
    align-items: center;
    width: 328px;
    height: 46px;
    margin: 0 2px 0 15px;
    padding: 0 6px 0 14px;
    border: 2px solid #c0c0bc;
    border-radius: 23px;
    background-color: #f4f4f2;
}
.search svg {
    width: 24px;
    height: 24px;
}
.search input {
    flex: 1;
    min-width: 0;
    padding-left: 14px;
    font-family: "Open Sans", sans-serif;
    font-size: 19px;
    outline: 0;
}
.search input::placeholder {
    color: #666;
}
.search .bing {
    width: 30px;
    height: 30px;
}
.task {
    position: relative;
    width: 60px;
    height: 60px;
    border-radius: 6px;
}
.task svg {
    display: block;
    width: 36px;
    height: 36px;
    margin: 0 auto;
}
.task.active {
    background-color: #fde6e8;
}
.open::after {
    content: "";
    position: absolute;
    left: 26px;
    bottom: 1px;
    width: 9px;
    height: 5px;
    border-radius: 3px;
    background-color: #807a78;
}
.active::after {
    background-color: #c42b1c;
}
.tray {
    flex: 1;
    display: flex;
    align-items: center;
    justify-content: flex-end;
    gap: 12px;
}
.tray svg {
    display: block;
    width: 24px;
    height: 24px;
    fill: none;
    stroke: #222;
    stroke-width: 2;
}
.cloud {
    margin: 0 12px;
}
.clock {
    display: flex;
    flex-direction: column;
    text-align: right;
    margin-left: 13px;
    font-family: "Open Sans", sans-serif;
    font-size: 17px;
    line-height: 24px;
}
.badge {
    width: 24px;
    height: 24px;
    margin-left: 5px;
    border-radius: 50%;
    background-color: #0078d7;
    color: #fff;
    font-size: 15px;
}
```
FILE: script.js
```
// Bed origin and scale, in drawing units
const originX = 681.5;
const originY = 871.5;
const scale = 1.5567;
const step = 15.5867;

const bed = document.getElementById('bed');
let out = '';

function text(cls, x, y, value) {
    out += `<text class="${cls}" x="${x}" y="${y}">${value}</text>`;
}
function line(cls, x1, y1, x2, y2) {
    out += `<line class="${cls}" x1="${x1}" y1="${y1}" x2="${x2}" y2="${y2}"/>`;
}

// Machine bed, 10 mm grid
for (let mm = 10; mm < 400; mm += 10) {
    const x = Math.round(originX + mm * scale) + 0.5;
    const y = Math.round(originY - mm * scale) + 0.5;
    line('grid-line', x, 255.5, x, originY);
    if (y > 256) line('grid-line', originX, y, 1304.5, y);
}
out += `<rect class="outline" x="${originX}" y="255.5" width="623" height="616"/>`;

// Cut pattern
for (let i = 0; i < 35; i++) {
    const x = 697 + i * step;
    line('cut-line', x, 319, x, 865);
}
for (let i = 0; i < 36; i++) {
    const y = 319.5 + i * step;
    line('cut-line', 696, y, 1242, y);
}
line('outline', 697, 319, 1229, 871);
line('outline', 694, 867, 1227, 320);
out += '<circle class="score" cx="962" cy="595.5" r="79"/>';

// Numbers round the pattern
text('mark', 690, 318, 0);
for (let i = 1; i < 35; i++) {
    const value = i < 11 ? i * 10 : (i + 1) * 10;
    text('mark', 694 + i * step, i === 1 ? 318 : 319, value);
    text('mark heavy', 693 + i * step, 869, value);
}
for (let i = 0; i < 36; i++) {
    const value = 350 - i * 10;
    text('mark', value ? 691 : 694, 325 + i * 15.5, value);
    text('mark', 1235, 323 + i * step, value);
}
text('mark', 761, 251, 350);

// Rulers
for (let mm = -360; mm <= 760; mm += 40) {
    const x = originX + mm * scale;
    text('ruler center', x, 211, mm);
    text('ruler center', x, 933, mm);
}
for (let mm = -40; mm <= 400; mm += 40) {
    const y = originY - mm * scale + 7;
    text('ruler', 89, y, mm);
    text('ruler right', 1912, y, mm);
}

// Origin marker
out += '<rect x="681" y="865" width="6" height="6" fill="#8a2020"/>';
out += '<rect x="677.5" y="866.5" width="8" height="8" fill="#50d050" fill-opacity=".75" stroke="#207020"/>';
text('axis', 678, 846, 'Y');
text('axis', 711, 881, 'X');

bed.innerHTML = out;

// Layer swatches: label, colour, text colour
const layers = [
    ['00', '#000000', '#fff'], ['01', '#0000ff', '#fff'], ['02', '#ff0000', '#fff'], ['03', '#00e000', '#000'],
    ['04', '#d0d000', '#000'], ['05', '#ff8000', '#000'], ['06', '#00e0e0', '#000'], ['07', '#ff00ff', '#fff'],
    ['08', '#b4b4b4', '#000'], ['09', '#0000a0', '#fff'], ['10', '#a00000', '#fff'], ['11', '#00a000', '#fff'],
    ['12', '#a0a000', '#000'], ['13', '#c08000', '#000'], ['14', '#00a0ff', '#fff'], ['15', '#a000a0', '#fff'],
    ['16', '#808080', '#fff'], ['17', '#7d87b9', '#000'], ['18', '#bb7784', '#000'], ['19', '#4a6fe3', '#fff'],
    ['20', '#d33f6a', '#fff'], ['21', '#8cd78c', '#000'], ['22', '#f0b98d', '#000'], ['23', '#f6c4e1', '#000'],
    ['24', '#fa9ed4', '#000'], ['25', '#500a78', '#fff'], ['26', '#b45a00', '#fff'], ['27', '#004754', '#fff'],
    ['28', '#86fa88', '#000'], ['29', '#ffdb66', '#000'], ['T1', '#f36926', '#000'], ['T2', '#0c96d9', '#fff']
];
const swatches = document.getElementById('swatches');
layers.forEach(([name, color, ink]) => {
    if (name === 'T1') {
        const sep = document.createElement('i');
        sep.className = 'sep';
        swatches.appendChild(sep);
    }
    const button = document.createElement('button');
    button.textContent = name;
    button.style.backgroundColor = color;
    button.style.color = ink;
    if (name === '00') button.className = 'current';
    swatches.appendChild(button);
});
```
